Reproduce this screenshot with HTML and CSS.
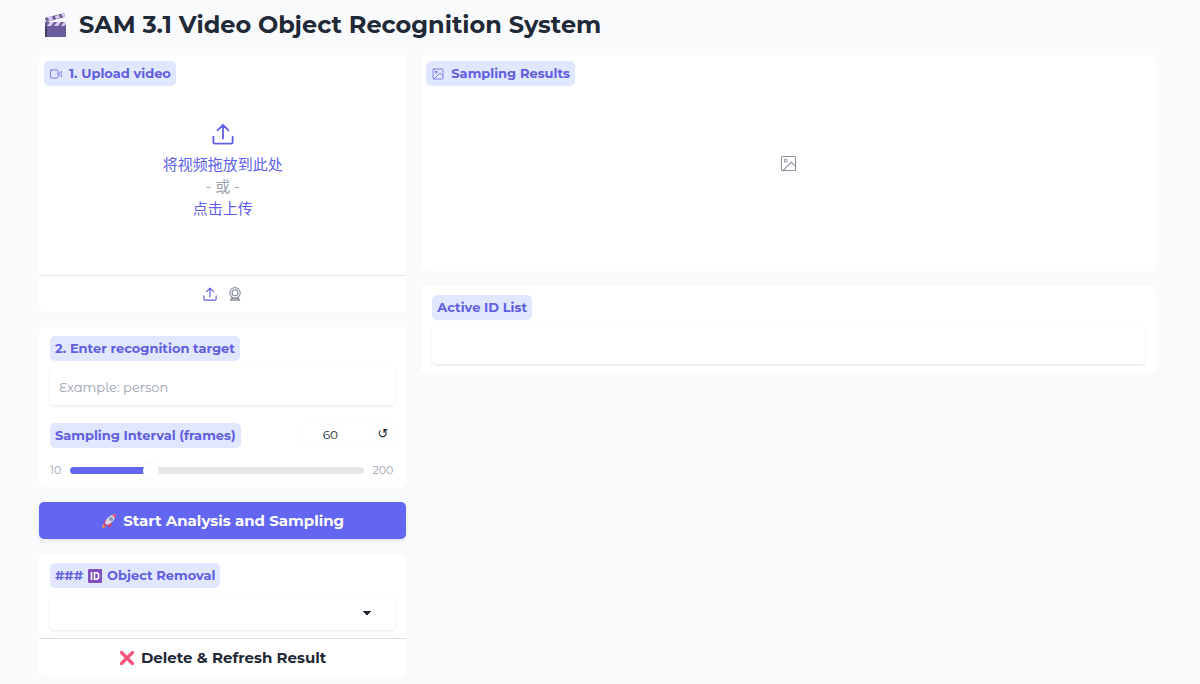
FILE: index.html
```html
<!DOCTYPE html>
<html lang="en">
<head>
<meta charset="utf-8">
<meta name="viewport" content="width=device-width, initial-scale=1">
<title>SAM 3.1 Video Object Recognition System</title>
<link rel="stylesheet" href="styles.css">
</head>
<body>
<svg class="defs" aria-hidden="true">
  <symbol id="upload" viewBox="0 0 24 24"><path d="M1.500 15v6a1.500 1.500 0 0 0 1.500 1.500h18a1.500 1.500 0 0 0 1.500-1.500V15M12 17V2M6 8l6-6 6 6"/></symbol>
  <symbol id="picture" viewBox="0 0 24 24"><rect x="2" y="2" width="20" height="20" rx="2"/><circle cx="8" cy="8" r="2"/><path d="M4 22l12-12 6 6"/></symbol>
  <symbol id="video" viewBox="0 0 24 24"><rect x="1" y="4" width="15" height="16" rx="2"/><path d="M23 7l-6 5 6 5z"/></symbol>
  <symbol id="webcam" viewBox="0 0 24 24"><circle cx="12" cy="10" r="9"/><circle cx="12" cy="10" r="5"/><path d="M7 18l-3 4.500h16L17 18M7 20h10"/></symbol>
</svg>
<main class="app">
  <h1 class="title">
    <svg class="clapper" viewBox="0 0 24 26" aria-hidden="true">
      <path fill="#6a5b9d" d="M1 11h21v13a1 1 0 0 1-1 1H2a1 1 0 0 1-1-1z"/>
      <path fill="#443c63" d="M1 11h2v14H2a1 1 0 0 1-1-1z"/>
      <path fill="#6c6190" d="M1 6L20 1l1 4L2 10zM1 10h21v4H1z"/>
      <path fill="#d9c9fa" d="M4 5l4-1 1 4-4 1zM11 4l4-1 1 3-4 1zM17 2l3-1 1 4-2 0zM6 10h4l-3 4H3zM13 10h4l-3 4h-4zM20 10h2v2l-2 2h-3z"/>
    </svg>
    <span>SAM 3.1 Video Object Recognition System</span>
  </h1>
  <div class="columns">
    <div class="column">
      <section class="card upload">
        <h2 class="tag media-tag"><svg class="icon tag-icon"><use href="#video"/></svg>1. Upload video</h2>
        <button class="drop" type="button">
          <svg class="icon drop-icon"><use href="#upload"/></svg>
          <span>将视频拖放到此处</span>
          <span class="or">- 或 -</span>
          <span>点击上传</span>
        </button>
        <div class="sources">
          <button class="source active" type="button" aria-label="Upload file"><svg class="icon"><use href="#upload"/></svg></button>
          <button class="source" type="button" aria-label="Webcam"><svg class="icon webcam"><use href="#webcam"/></svg></button>
        </div>
      </section>
      <section class="card form">
        <div class="field">
          <label class="tag" for="target">2. Enter recognition target</label>
          <input class="box" id="target" type="text" placeholder="Example: person">
        </div>
        <div class="interval">
          <div class="interval-head">
            <label class="tag" for="interval">Sampling Interval (frames)</label>
            <div class="interval-value">
              <input class="number" type="text" inputmode="numeric" value="60" aria-label="Sampling interval value">
              <button class="reset" type="button" aria-label="Reset">↺</button>
            </div>
          </div>
          <div class="slider-row">
            <span>10</span>
            <input class="slider" id="interval" type="range" min="10" max="200" value="60">
            <span>200</span>
          </div>
        </div>
      </section>
      <button class="primary" type="button">
        <svg class="emoji" viewBox="0 0 16 16" aria-hidden="true">
          <path fill="#f59e3b" d="M1 15l1-4 3 3z"/>
          <path fill="#e33b5b" d="M2 9l4-3 5 5-3 4-1-4-3-2zM3 11l2-1 1 1-1 2-2 1z"/>
          <path fill="#d9d5e4" d="M4 10c1-5 5-8 10-9 1 5-3 9-8 11z"/>
          <path fill="#f8466b" d="M11 2l4-1-1 4z"/>
          <circle cx="10" cy="6" r="2" fill="#8a96b8"/>
        </svg>
        <span>Start Analysis and Sampling</span>
      </button>
      <section class="card removal">
        <div class="field removal-field">
          <label class="tag" for="object">###
            <svg class="id-badge" viewBox="0 0 14 14" aria-hidden="true"><rect width="14" height="14" rx="1" fill="#8251c0"/><path fill="none" stroke="#fff" stroke-width="1.500" d="M3.500 3v8M6.500 3.700h2c3 0 3 6.600 0 6.600h-2z"/></svg>
            Object Removal</label>
          <select class="box select" id="object"><option value=""></option></select>
        </div>
        <button class="delete" type="button">
          <svg class="emoji" viewBox="0 0 16 16" aria-hidden="true"><path fill="none" stroke="#f1567a" stroke-width="3.200" stroke-linecap="round" d="M2.500 2.500l11 11M13.500 2.500l-11 11"/></svg>
          <span>Delete &amp; Refresh Result</span>
        </button>
      </section>
    </div>
    <div class="column">
      <section class="card results">
        <h2 class="tag media-tag"><svg class="icon tag-icon"><use href="#picture"/></svg>Sampling Results</h2>
        <div class="empty"><svg class="icon empty-icon"><use href="#picture"/></svg></div>
      </section>
      <section class="card field">
        <label class="tag" for="ids">Active ID List</label>
        <input class="box" id="ids" type="text">
      </section>
    </div>
  </div>
</main>
</body>
</html>
```
FILE: styles.css
```css
* { box-sizing: border-box; }
body {
  margin: 0;
  background: #f9fafc;
  color: #1f2937;
  font-family: Montserrat, Inter, "Noto Sans CJK SC", sans-serif;
  font-size: 14px;
}
button, input, select { font: inherit; color: inherit; }
button { border: 0; background: none; padding: 0; cursor: pointer; }
.defs { position: absolute; width: 0; height: 0; }
.icon { width: 16px; height: 16px; flex: none; fill: none; stroke: currentColor; stroke-width: 1.5; stroke-linecap: round; stroke-linejoin: round; }
.app { padding: 8px 44px 8px 39px; }
.title {
  display: flex;
  align-items: center;
  gap: 11px;
  margin: 0 0 14px;
  padding-left: 5px;
  font-size: 24px;
  line-height: 33px;
  font-weight: 700;
}
.clapper { width: 24px; height: 26px; flex: none; }
.columns { display: grid; grid-template-columns: 1fr 2fr; gap: 15px; align-items: start; }
.column { display: flex; flex-direction: column; gap: 15px; min-width: 0; }
.card { background: #fff; border-radius: 5px; }
.tag {
  display: flex;
  align-items: center;
  gap: 5px;
  width: fit-content;
  height: 25px;
  margin: 0;
  padding: 0 5px;
  border-radius: 5px;
  background: #e0e7ff;
  color: #6260e0;
  font-size: 13px;
  line-height: 25px;
  font-weight: 700;
  white-space: nowrap;
}
.media-tag { margin: 5px 0 0 5px; padding-left: 6px; gap: 7px; }
.tag-icon { width: 12px; height: 12px; }
.upload, .results { display: flex; flex-direction: column; padding-top: 1px; }
.drop {
  display: flex;
  flex-direction: column;
  align-items: center;
  padding: 37px 0 55px;
  color: #615fe8;
  font-size: 15px;
  line-height: 22px;
}
.drop-icon { width: 22px; height: 22px; margin-bottom: 9px; stroke-width: 2; }
.or { color: #9ca3af; }
.sources { display: flex; justify-content: center; gap: 11px; padding: 11px 0; border-top: 1px solid #e5e7eb; }
.source { display: flex; color: #8b92a0; }
.source .icon { width: 14px; height: 14px; stroke-width: 2; }
.source.active { color: #6260e0; }
.field { display: flex; flex-direction: column; gap: 7px; padding: 9px 11px; }
.box {
  width: 100%;
  height: 37px;
  padding: 0 9px;
  border: 0;
  border-radius: 4px;
  background: #fff;
  box-shadow: 0 1px 3px #0000001c;
  font-family: "Montserrat Alternates", Montserrat, Inter, sans-serif;
  font-size: 13px;
  outline-offset: 1px;
}
.box::placeholder { color: #9ca3af; opacity: 1; }
.interval { padding: 9px 11px; }
.interval-head { display: flex; justify-content: space-between; }
.interval-value { display: flex; height: 22px; }
.number { width: 68px; padding: 0 12px 0 0; border: 1px solid #fcfcfd; background: #fff; text-align: center; font-size: 12px; }
.reset { width: 25px; border: 1px solid #fcfcfd; font-family: "DejaVu Sans", sans-serif; font-size: 13px; line-height: 20px; }
.slider-row { display: flex; align-items: center; gap: 9px; margin-top: 14px; padding-right: 2px; color: #9ca3af; font-size: 11px; line-height: 16px; }
.slider { appearance: none; flex: 1; min-width: 0; height: 16px; margin: 0; background: none; }
.slider::-webkit-slider-runnable-track { height: 7px; border-radius: 4px; background: linear-gradient(to right, #6366f1 27%, #e5e7e9 27%); }
.slider::-webkit-slider-thumb { appearance: none; width: 16px; height: 16px; margin-top: -4px; border-radius: 50%; background: #fff; box-shadow: 0 0 2px #00000018; }
.primary, .delete { display: flex; align-items: center; justify-content: center; gap: 6px; width: 100%; height: 37px; font-size: 15px; font-weight: 700; }
.primary { border-radius: 5px; background: #6366f1; color: #fff; box-shadow: 0 2px 4px #00000018; }
.emoji { width: 16px; height: 16px; flex: none; }
.id-badge { width: 14px; height: 14px; }
.removal-field { padding-bottom: 8px; }
.removal-field .box { height: 35px; }
.select { appearance: none; padding-right: 34px; background: #fff conic-gradient(from -45deg at 50% 100%, #1f2937 90deg, transparent 0) no-repeat right 24px center / 8px 4px; }
.delete { height: 38px; border-top: 1px solid #dcdee2; }
.empty { display: flex; justify-content: center; padding: 69px 0 99px; color: #8b92a0; }
.empty-icon { width: 17px; height: 17px; }
```
